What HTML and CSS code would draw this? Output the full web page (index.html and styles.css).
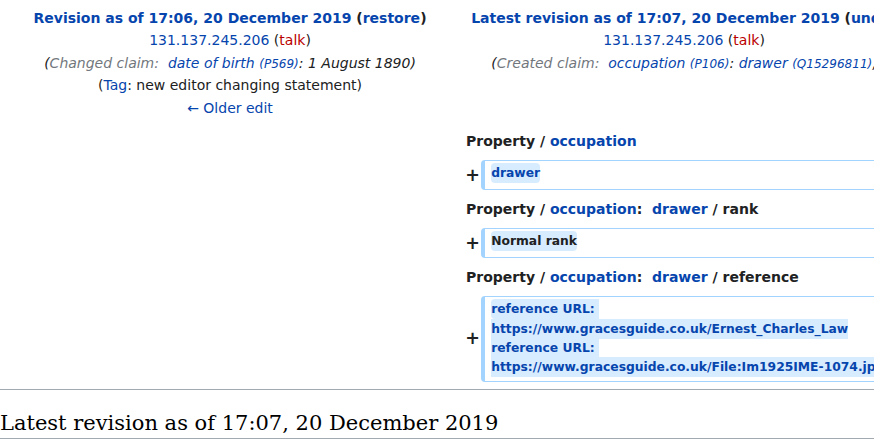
FILE: index.html
```html
<!DOCTYPE html>
<html lang="en">
<head>
<meta charset="utf-8">
<title>Difference between revisions</title>
<link rel="stylesheet" href="styles.css">
</head>
<body>
<div class="page">
  <table class="diff">
    <colgroup>
      <col class="col-marker"><col class="col-content"><col class="col-marker"><col class="col-content">
    </colgroup>
    <tbody>
      <tr>
        <td colspan="2" class="diff-title">
          <div><strong><a href="#">Revision as of 17:06, 20 December 2019</a> (<a href="#">restore</a>)</strong></div>
          <div><a href="#">131.137.245.206</a> (<a href="#" class="new">talk</a>)</div>
          <div class="comment">(<span class="autocomment">Changed claim:&nbsp;</span> <a href="#">date of birth <span class="item-id">(P569)</span></a>: 1 August 1890)</div>
          <div>(<a href="#">Tag</a>: new editor changing statement)</div>
          <div><a href="#">← Older edit</a></div>
        </td>
        <td colspan="2" class="diff-title">
          <div><strong><a href="#">Latest revision as of 17:07, 20 December 2019</a> (<a href="#">undo</a>)</strong></div>
          <div><a href="#">131.137.245.206</a> (<a href="#" class="new">talk</a>)</div>
          <div class="comment">(<span class="autocomment">Created claim:&nbsp;</span> <a href="#">occupation <span class="item-id">(P106)</span></a>: <a href="#">drawer <span class="item-id">(Q15296811)</span></a>,</div>
        </td>
      </tr>
      <tr>
        <td colspan="2" class="diff-lineno"></td>
        <td colspan="2" class="diff-lineno">Property / <a href="#">occupation</a></td>
      </tr>
      <tr>
        <td colspan="2" class="diff-empty"></td>
        <td class="diff-marker"><span class="marker-sign">+</span></td>
        <td class="diff-addedline"><span class="diffchange"><a href="#">drawer</a></span></td>
      </tr>
      <tr>
        <td colspan="2" class="diff-lineno"></td>
        <td colspan="2" class="diff-lineno">Property / <a href="#">occupation</a>:&nbsp; <a href="#">drawer</a> / rank</td>
      </tr>
      <tr>
        <td colspan="2" class="diff-empty"></td>
        <td class="diff-marker"><span class="marker-sign">+</span></td>
        <td class="diff-addedline"><span class="diffchange">Normal rank</span></td>
      </tr>
      <tr>
        <td colspan="2" class="diff-lineno"></td>
        <td colspan="2" class="diff-lineno">Property / <a href="#">occupation</a>:&nbsp; <a href="#">drawer</a> / reference</td>
      </tr>
      <tr>
        <td colspan="2" class="diff-empty"></td>
        <td class="diff-marker"><span class="marker-sign">+</span></td>
        <td class="diff-addedline"><span class="diffchange link">reference URL: https://www.gracesguide.co.uk/Ernest_Charles_Law
reference URL: https://www.gracesguide.co.uk/File:Im1925IME-1074.jpg</span></td>
      </tr>
    </tbody>
  </table>
  <hr class="diff-hr">
  <h2 class="current-title">Latest revision as of 17:07, 20 December 2019</h2>
</div>
</body>
</html>
```

FILE: styles.css
```css
html {
  overflow: hidden;
}

body {
  margin: 0;
  font-family: "DejaVu Sans", sans-serif;
  font-size: 14px;
  line-height: 1.6;
  color: #202122;
  background: #fff;
}

.page {
  width: 913px;
}

a {
  color: #0645ad;
  text-decoration: none;
}

a.new {
  color: #ba0000;
}

.diff {
  border-spacing: 4px;
  table-layout: fixed;
  width: 912px;
  margin: 2px 0 0 1px;
}

.col-marker {
  width: 18px;
}

.col-content {
  width: 428px;
}

.diff td {
  padding: 1px;
}

.diff .diff-title {
  text-align: center;
  vertical-align: top;
  padding: 1px 1px 3px;
}

.comment {
  font-style: italic;
}

.autocomment {
  color: #72777d;
}

.item-id {
  font-size: 0.86em;
}

.diff .diff-lineno {
  font-weight: bold;
  line-height: 22.4px;
  padding: 3.95px 0 3.95px 7px;
}

.diff .diff-marker {
  font-size: 17.5px;
  font-weight: bold;
  line-height: 1.2;
  padding: 0.25em 0;
  text-align: right;
  vertical-align: middle;
}

.marker-sign {
  margin-right: -3px;
}

.diff .diff-addedline {
  font-size: 12.32px;
  line-height: 19.3px;
  border: 1px solid #a3d3ff;
  border-left-width: 4px;
  border-radius: 4px;
  padding: 3.08px 6.16px;
  white-space: pre-wrap;
  overflow-wrap: break-word;
  vertical-align: top;
}

.diffchange {
  font-weight: bold;
  background: #d8ecff;
  border-radius: 0.33em;
  padding: 0.25em 0;
}

.diffchange.link {
  color: #0645ad;
}

.diff-hr {
  height: 1px;
  background: #a2a9b1;
  border: 0;
  margin: 3.8px 0 2.8px;
}

.current-title {
  font-family: "DejaVu Serif", serif;
  font-size: 21px;
  font-weight: normal;
  line-height: 1.3;
  color: #000;
  margin: 20px 0 3.5px;
  padding: 0;
  border-bottom: 1px solid #a2a9b1;
}
```
